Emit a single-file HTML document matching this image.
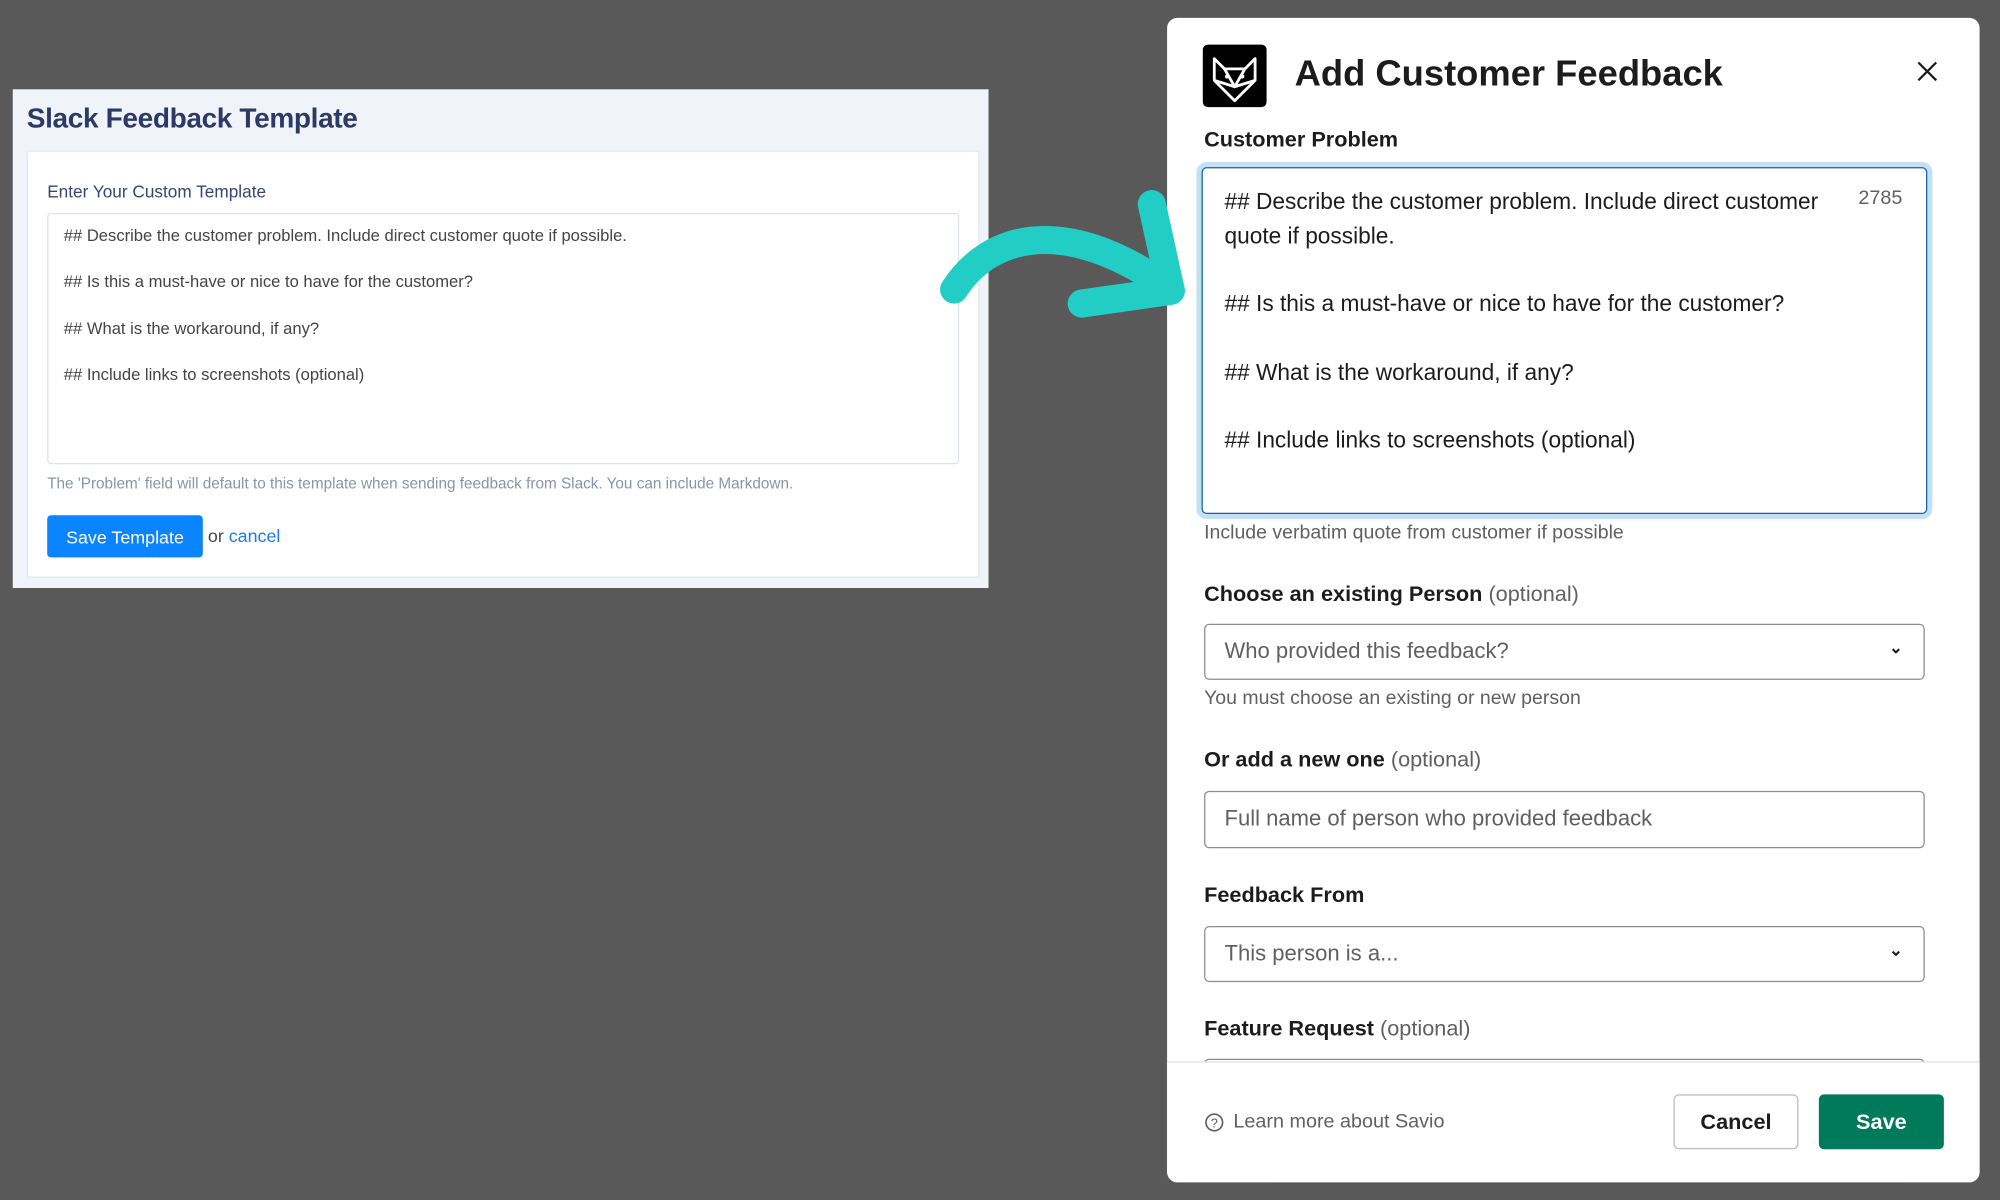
<!DOCTYPE html>
<html><head><meta charset="utf-8"><style>
html,body{margin:0;padding:0;background:#595959;width:2000px;height:1200px;overflow:hidden}
#s{position:absolute;left:0;top:0;width:1568px;height:941px;transform:scale(1.27551);transform-origin:0 0;font-family:"Liberation Sans",sans-serif}
.a{position:absolute;white-space:nowrap}
.lp{left:10px;top:70px;width:765px;height:391px;background:#f0f4f8}
.card{left:21px;top:118px;width:745px;height:333px;background:#fff;border:1px solid #e3e8ee;border-radius:2px}
.ta{left:37px;top:167px;width:713px;height:195px;border:1px solid #dde3ea;border-radius:3px;background:#fff}
.lt{font-size:13px;color:#444;left:50px}
.m{left:915px;top:14px;width:637px;height:912px;background:#fff;border-radius:8px}
.lbl{left:944px;font-size:17px;color:#1d1c1d;font-weight:bold}
.lbl span{font-weight:normal;color:#616061}
.hint{left:944px;font-size:15.3px;color:#616061}
.box{left:944px;width:563px;border:1px solid #8d8d8d;border-radius:4px;background:#fff}
.ph{left:960px;font-size:17.3px;color:#616061}
.rt{font-size:17.8px;color:#1d1c1d;left:960px}
</style></head><body><div id="s">
<div class="a lp"></div>
<div class="a" style="left:21px;top:80px;font-size:22px;color:#2d3a66;font-weight:bold;letter-spacing:-0.3px">Slack Feedback Template</div>
<div class="a card"></div>
<div class="a" style="left:37px;top:143px;font-size:13.5px;color:#3a4570">Enter Your Custom Template</div>
<div class="a ta"></div>
<div class="a lt" style="top:177px">## Describe the customer problem. Include direct customer quote if possible.</div>
<div class="a lt" style="top:213px">## Is this a must-have or nice to have for the customer?</div>
<div class="a lt" style="top:250px">## What is the workaround, if any?</div>
<div class="a lt" style="top:286px">## Include links to screenshots (optional)</div>
<div class="a" style="left:37px;top:372px;font-size:12px;color:#8a94a6">The 'Problem' field will default to this template when sending feedback from Slack. You can include Markdown.</div>
<div class="a" style="left:37px;top:404px;width:122px;height:33px;background:#0a84ff;border-radius:3px;color:#fff;font-size:14px;line-height:34px;text-align:center">Save Template</div>
<div class="a" style="left:163px;top:412px;font-size:14px;color:#444">or <span style="color:#1a7cf0">cancel</span></div>

<div class="a m"></div>
<div class="a" style="left:943px;top:35px;width:50px;height:49px;background:#000;border-radius:4px"></div>
<svg class="a" style="left:943px;top:35px" width="50" height="49" viewBox="0 0 50 49">
<path d="M9 11 L17 19 L33 19 L41 11 L41 28 L25 44 L9 28 Z M9 28 L25 33 L41 28 M17 19 L25 33 L33 19" fill="none" stroke="#fff" stroke-width="2.2" stroke-linejoin="round"/>
<circle cx="19" cy="25" r="1.6" fill="#fff"/><circle cx="31" cy="25" r="1.6" fill="#fff"/>
</svg>
<div class="a" style="left:1015px;top:42px;font-size:28.5px;font-weight:bold;color:#1d1c1d">Add Customer Feedback</div>
<svg class="a" style="left:1503px;top:48px" width="16" height="16"><path d="M1 1L15 15M15 1L1 15" stroke="#1d1c1d" stroke-width="1.8"/></svg>

<div class="a lbl" style="top:100px">Customer Problem</div>
<div class="a" style="left:942px;top:131px;width:567px;height:270px;border:1px solid #1264a3;border-radius:4px;box-shadow:0 0 0 4px #c3e1f3;background:#fff"></div>
<div class="a rt" style="top:148px">## Describe the customer problem. Include direct customer</div>
<div class="a rt" style="top:175px">quote if possible.</div>
<div class="a rt" style="top:228px">## Is this a must-have or nice to have for the customer?</div>
<div class="a rt" style="top:282px">## What is the workaround, if any?</div>
<div class="a rt" style="top:335px">## Include links to screenshots (optional)</div>
<div class="a" style="left:1457px;top:147px;font-size:15.5px;color:#616061">2785</div>
<div class="a hint" style="top:409px">Include verbatim quote from customer if possible</div>

<div class="a lbl" style="top:456px">Choose an existing Person <span>(optional)</span></div>
<div class="a box" style="top:489px;height:42px"></div>
<div class="a ph" style="top:500px">Who provided this feedback?</div>
<div class="a" style="left:1481px;top:500px;font-size:13px;color:#1d1c1d;font-weight:bold">&#8964;</div>
<div class="a hint" style="top:539px">You must choose an existing or new person</div>

<div class="a lbl" style="top:586px">Or add a new one <span>(optional)</span></div>
<div class="a box" style="top:620px;height:43px"></div>
<div class="a ph" style="top:631px">Full name of person who provided feedback</div>

<div class="a lbl" style="top:692px">Feedback From</div>
<div class="a box" style="top:726px;height:42px"></div>
<div class="a ph" style="top:737px">This person is a...</div>
<div class="a" style="left:1481px;top:737px;font-size:13px;color:#1d1c1d;font-weight:bold">&#8964;</div>

<div class="a lbl" style="top:797px">Feature Request <span>(optional)</span></div>
<div class="a box" style="top:830px;height:10px;border-bottom:none"></div>
<div class="a" style="left:915px;top:832px;width:637px;height:94px;background:#fff;border-top:1px solid #ddd;border-radius:0 0 8px 8px"></div>
<svg class="a" style="left:944px;top:872px" width="16" height="16"><circle cx="8" cy="8" r="6.5" fill="none" stroke="#616061" stroke-width="1.3"/><text x="8" y="12" font-size="10" text-anchor="middle" fill="#616061" font-family="Liberation Sans">?</text></svg>
<div class="a" style="left:967px;top:871px;font-size:15.5px;color:#616061">Learn more about Savio</div>
<div class="a" style="left:1312px;top:858px;width:96px;height:41px;border:1px solid #bbb;border-radius:4px;font-size:17px;font-weight:bold;color:#1d1c1d;text-align:center;line-height:41px">Cancel</div>
<div class="a" style="left:1426px;top:858px;width:98px;height:43px;background:#007a5a;border-radius:4px;font-size:17px;font-weight:bold;color:#fff;text-align:center;line-height:43px">Save</div>

<svg class="a" style="left:720px;top:140px" width="220" height="130" viewBox="720 140 220 130">
<path d="M748 227 C775 185 830 170 905 218" fill="none" stroke="#22cdc6" stroke-width="22" stroke-linecap="round"/>
<path d="M903 160 L918 228 L848 238" fill="none" stroke="#22cdc6" stroke-width="22" stroke-linecap="round" stroke-linejoin="round"/>
</svg>
</div></body></html>
